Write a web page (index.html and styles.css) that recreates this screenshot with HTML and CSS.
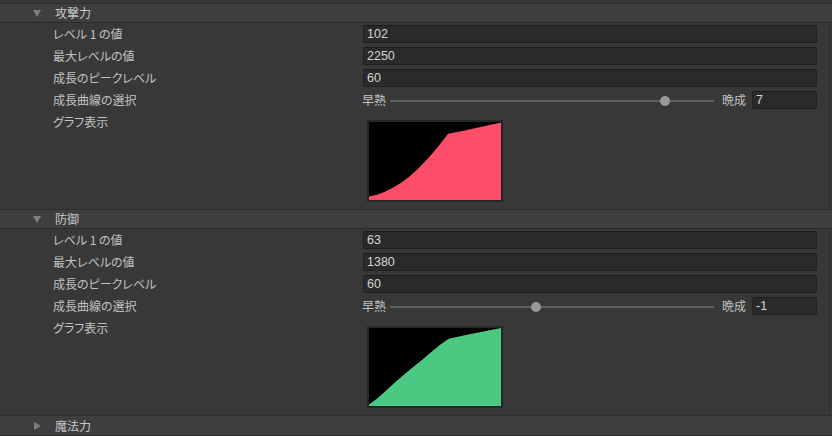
FILE: index.html
```html
<!DOCTYPE html>
<html lang="ja">
<head>
<meta charset="utf-8">
<title>Inspector</title>
<link rel="stylesheet" href="styles.css">
</head>
<body>
<div class="inspector">
  <section class="group">
    <div class="group-header"><span class="arrow down"></span><span class="title">攻撃力</span></div>
    <div class="group-body">
      <div class="row"><div class="label">レベル 1 の値</div><div class="field">102</div></div>
      <div class="row"><div class="label">最大レベルの値</div><div class="field">2250</div></div>
      <div class="row"><div class="label">成長のピークレベル</div><div class="field">60</div></div>
      <div class="row">
        <div class="label">成長曲線の選択</div>
        <div class="slider-ctl">
          <span class="end early">早熟</span>
          <div class="track"><div class="knob" style="left:85%"></div></div>
          <span class="end late">晩成</span>
          <div class="field small">7</div>
        </div>
      </div>
      <div class="row graph-row">
        <div class="label">グラフ表示</div>
        <div class="graph">
          <svg viewBox="0 0 133 80" preserveAspectRatio="none">
            <polygon class="fill-red" points="0,80 0,76.5 8,74.5 15.9,71.5 23.9,67.5 31.9,62.5 39.9,56.6 47.8,49.4 55.8,41.3 63.8,32.3 71.7,22.6 79.7,12 98.7,8.2 133,0.5 133,80"/>
          </svg>
        </div>
      </div>
    </div>
  </section>

  <section class="group">
    <div class="group-header"><span class="arrow down"></span><span class="title">防御</span></div>
    <div class="group-body">
      <div class="row"><div class="label">レベル 1 の値</div><div class="field">63</div></div>
      <div class="row"><div class="label">最大レベルの値</div><div class="field">1380</div></div>
      <div class="row"><div class="label">成長のピークレベル</div><div class="field">60</div></div>
      <div class="row">
        <div class="label">成長曲線の選択</div>
        <div class="slider-ctl">
          <span class="end early">早熟</span>
          <div class="track"><div class="knob" style="left:45%"></div></div>
          <span class="end late">晩成</span>
          <div class="field small">-1</div>
        </div>
      </div>
      <div class="row graph-row">
        <div class="label">グラフ表示</div>
        <div class="graph">
          <svg viewBox="0 0 133 80" preserveAspectRatio="none">
            <polygon class="fill-green" points="0,80 0,78.5 8,72.5 15.3,66 28,54 42,42 53,33 64,23.5 72,17 80.3,11 98.7,7 133,0 133,80"/>
          </svg>
        </div>
      </div>
    </div>
  </section>

  <section class="group collapsed">
    <div class="group-header"><span class="arrow right"></span><span class="title">魔法力</span></div>
  </section>
</div>
</body>
</html>
```

FILE: styles.css
```css
html, body {
  margin: 0;
  padding: 0;
  background: #383838;
}

body {
  width: 832px;
  height: 436px;
  overflow: hidden;
  font-family: "Noto Sans CJK JP", "Liberation Sans", sans-serif;
  font-size: 12px;
  color: #c2c2c2;
  font-feature-settings: "palt";
}

.inspector {
  padding-top: 3px;
  display: flex;
  flex-direction: column;
}

.group-header {
  height: 18px;
  border-top: 1px solid #2e2e2e;
  border-bottom: 1px solid #2a2a2a;
  background: #3e3e3e;
  display: flex;
  align-items: center;
}

.arrow {
  width: 0;
  height: 0;
  margin-left: 33px;
  border-style: solid;
}

.arrow.down {
  border-width: 7px 4px 0 4px;
  border-color: #7e7e7e transparent transparent transparent;
  margin-top: 1px;
}

.arrow.right {
  border-width: 4px 0 4px 7px;
  border-color: transparent transparent transparent #7e7e7e;
  margin-left: 34px;
}

.title {
  margin-left: 14px;
  color: #c8c8c8;
  line-height: 18px;
}

.group-body {
  display: flex;
  flex-direction: column;
  padding-right: 12px;
  margin-right: 2px;
  border-right: 1px solid #2f2f2f;
}

.row {
  height: 22px;
  display: flex;
  align-items: center;
  padding-left: 53px;
}

.label {
  width: 310px;
  flex: none;
  line-height: 22px;
  white-space: nowrap;
}

.field {
  flex: 1;
  height: 16px;
  line-height: 16px;
  padding-left: 3px;
  background: #2a2a2a;
  border: 1px solid #212121;
  border-top-color: #1b1b1b;
  border-radius: 2px;
  color: #d4d4d4;
  font-family: "Liberation Sans", "Noto Sans CJK JP", sans-serif;
  font-size: 12.5px;
}

.field.small {
  flex: none;
  width: 60px;
  margin-left: 6px;
}

.slider-ctl {
  flex: 1;
  display: flex;
  align-items: center;
  margin-left: -1px;
}

.end {
  flex: none;
  line-height: 22px;
}

.track {
  position: relative;
  flex: 1;
  height: 2px;
  background: #5f5f5f;
  margin: 1px 8px 0 4px;
}

.knob {
  position: absolute;
  top: -4px;
  width: 10px;
  height: 10px;
  margin-left: -5px;
  border-radius: 50%;
  background: #9a9a9a;
}

.graph-row {
  height: auto;
  align-items: flex-start;
  padding-bottom: 7px;
}

.graph {
  margin-top: 9px;
  margin-left: 4px;
  width: 132px;
  height: 78px;
  background: #000;
  border: 2px solid #262626;
}

.graph svg {
  display: block;
  width: 100%;
  height: 100%;
}

.fill-red {
  fill: #fd4d68;
}

.fill-green {
  fill: #4bc983;
}

.collapsed .group-header {
  height: 19px;
}
```
